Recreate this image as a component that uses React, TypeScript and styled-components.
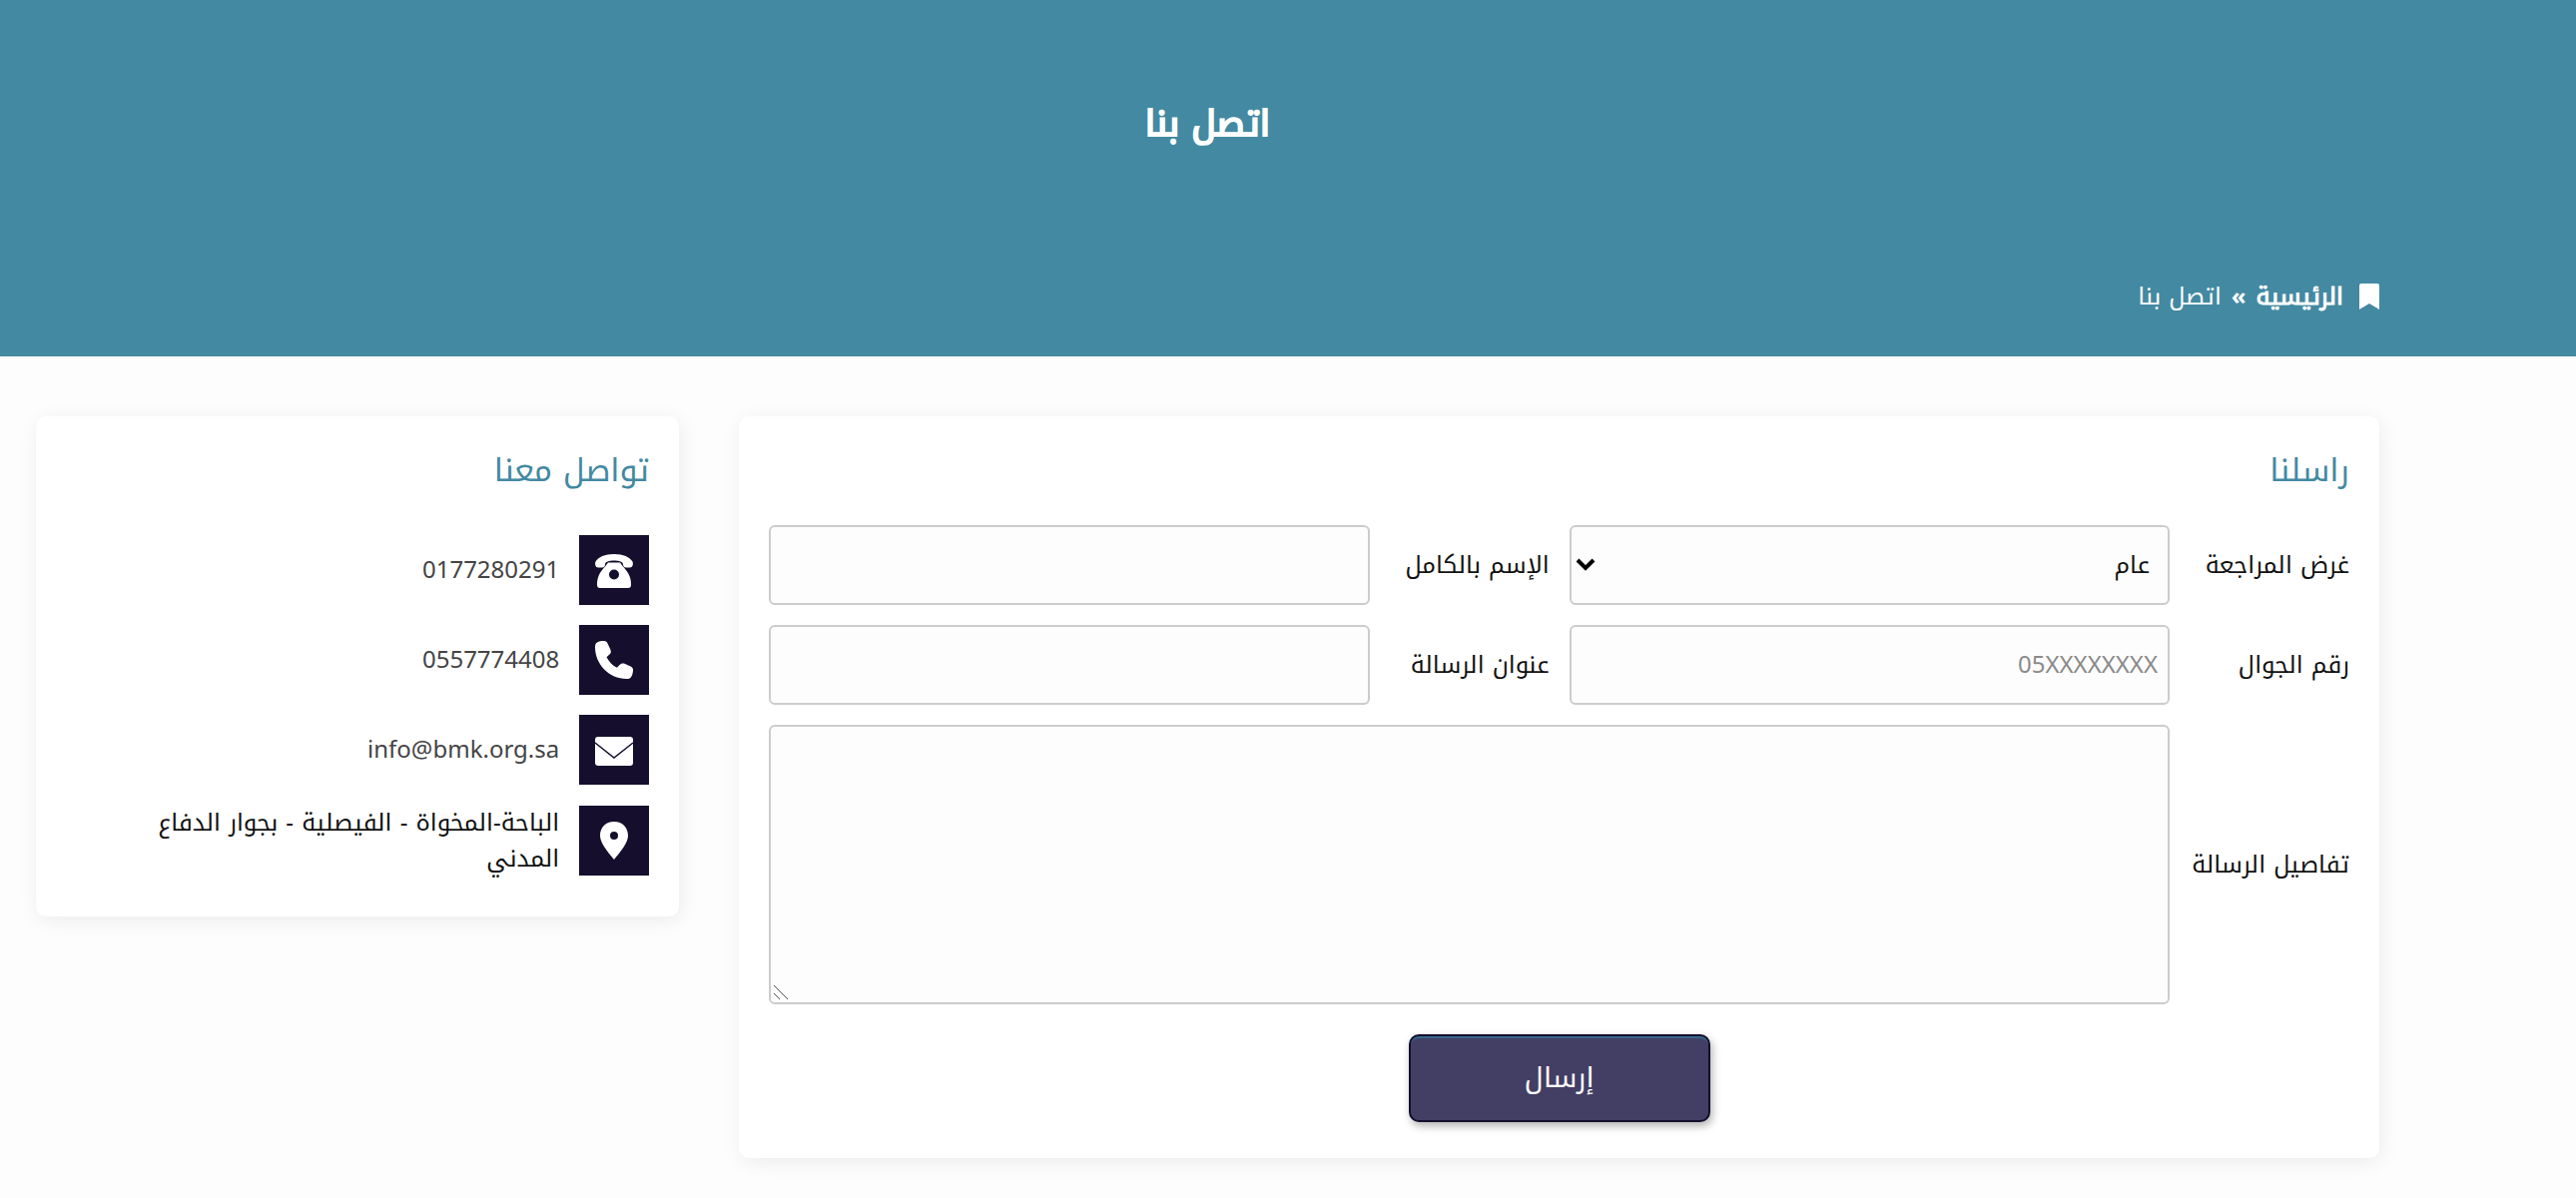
import React, { useId } from "react";
import styled, { createGlobalStyle } from "styled-components";

const GlobalStyle = createGlobalStyle`
  *, *::before, *::after { box-sizing: border-box; }
  body {
    margin: 0;
    background: #fdfdfd;
    color: #111;
    font: 400 24px/36px "Noto Kufi Arabic", "Open Sans", "Noto Sans", sans-serif;
  }
`;

const Hero = styled.header`
  display: flex;
  flex-direction: column;
  padding: 96px 197px 45px 36px;
  background: #4389a2;
  color: #fff;
`;

const PageTitle = styled.h1`
  margin: 0 0 130px;
  font-size: 36px;
  line-height: 56px;
  font-weight: 400;
  -webkit-text-stroke: 2px currentColor;
  text-align: center;
`;

const Breadcrumb = styled.nav`
  display: flex;
  align-items: center;
  gap: 10px;
  line-height: 30px;
`;

const BookmarkIcon = styled.svg`
  width: 20px;
  height: 26px;
  margin-inline-end: 6px;
  fill: #fff;
`;

const HomeLink = styled.a`
  color: inherit;
  -webkit-text-stroke: 1px currentColor;
  text-decoration: none;
`;

const Content = styled.main`
  display: grid;
  grid-template-columns: 51fr 20fr;
  align-items: start;
  gap: 60px;
  padding: 60px 197px 40px 36px;
`;

const Card = styled.section`
  padding: 30px;
  border-radius: 10px;
  background: #fff;
  box-shadow: 2px 4px 20px rgba(0, 0, 0, 0.07);
`;

const CardTitle = styled.h2`
  margin: 0 0 29px;
  color: #4389a2;
  font-size: 32px;
  line-height: 50px;
  font-weight: 400;
`;

const Form = styled.form`
  display: grid;
  grid-template-columns: 160px minmax(0, 1fr) 160px minmax(0, 1fr);
  align-items: center;
  gap: 20px;
`;

const Label = styled.label`
  white-space: nowrap;
`;

const controlStyle = `
  width: 100%;
  margin: 0;
  padding: 10px;
  border: 2px solid #ccc;
  border-radius: 6px;
  background-color: #fdfdfd;
  color: #111;
  font: inherit;
`;

const Input = styled.input`
  ${controlStyle}
  height: 80px;
  text-align: right;

  &::placeholder { color: #8a8a8a; opacity: 1; }
`;

const Stack = styled.div<{ $wide?: boolean }>`
  display: grid;
  grid-column: ${(p) => (p.$wide ? "2 / -1" : "auto")};

  > * { grid-area: 1 / 1; }
`;

const Select = styled.select`
  ${controlStyle}
  height: 80px;
  padding-inline: 18px 36px;
  appearance: none;
`;

const Arrow = styled.svg`
  align-self: center;
  justify-self: end;
  width: 20px;
  height: 14px;
  margin-inline-end: 6px;
  fill: none;
  stroke: #000;
  stroke-width: 4;
  pointer-events: none;
`;

const TextArea = styled.textarea`
  ${controlStyle}
  display: block;
  height: 280px;
  resize: both;

  &::-webkit-resizer { background: transparent; }
`;

const Grip = styled.svg`
  align-self: end;
  justify-self: end;
  width: 16px;
  height: 16px;
  margin: 4px;
  stroke: #555;
  stroke-width: 1;
  pointer-events: none;
`;

const Submit = styled.button`
  grid-column: 1 / -1;
  justify-self: center;
  width: 302px;
  height: 88px;
  margin: 10px 0 6px;
  padding: 0;
  border: 2px solid #150f2d;
  border-radius: 10px;
  background: #423e64;
  box-shadow: inset 0 3px 1px -1px #356b8c, 2px 4px 8px rgba(0, 0, 0, 0.3);
  color: #fff;
  font: inherit;
  font-size: 28px;
`;

const ContactList = styled.ul`
  margin: 0;
  padding: 0;
  list-style: none;
`;

const ContactItem = styled.li`
  display: flex;
  align-items: center;
  gap: 20px;
  padding-block: 10px;
  padding-inline-end: 40px;
`;

const IconBox = styled.span`
  display: grid;
  place-items: center;
  flex: none;
  width: 70px;
  height: 70px;
  background: #150f2d;
`;

const Icon = styled.svg`
  width: 40px;
  height: 40px;
  fill: #fff;
`;

const ContactLink = styled.a`
  color: #444;
  text-decoration: none;
`;

const Address = styled.address`
  font-style: normal;
`;

const TelephoneIcon = () => (
  <Icon viewBox="0 0 40 40" aria-hidden="true">
    <path d="M20 4C11 4 4 7 1.500 11.500C.5 14 1.500 17.500 4 17.500H8C10 17.500 11 16 11 14.500C11 11.500 15 10.500 20 10.500S29 11.500 29 14.500C29 16 30 17.500 32 17.500H36C38.500 17.500 39.500 14 38.500 11.500C36 7 29 4 20 4Z" />
    <path fillRule="evenodd" d="M14 12.500H26C28 16 33 20 35.500 26C37 30 37 32 37 35C37 37 36 38 34 38H6C4 38 3 37 3 35C3 32 3 30 4.500 26C7 20 12 16 14 12.500ZM20 19.500A5 5 0 1 0 20 29.500A5 5 0 1 0 20 19.500Z" />
  </Icon>
);

const PhoneIcon = () => (
  <Icon viewBox="0 0 40 40" aria-hidden="true">
    <path d="M3 2.500C5.500 1.200 8 .8 10 1C12 1.200 13 2 13.800 4L16.500 10C17.300 12 16.800 13.500 15.200 14.800L12.500 17.200C15 22 18.500 25.500 23 27.800L25.500 25C27 23.500 28.500 23 30.500 23.800L36.500 26.400C38.500 27.400 39.300 28.500 39 31C38.800 33.500 38 36 36.800 37.500C36 38.700 34.500 39 32.500 39C15 39 1 24 1 7.500C1 5 1.500 3.300 3 2.500Z" />
  </Icon>
);

const MailIcon = () => (
  <Icon viewBox="0 0 40 40" aria-hidden="true">
    <rect x="1" y="7" width="38" height="29" rx="3" />
    <path d="M1 13L20 28L39 13" fill="none" stroke="#150f2d" strokeWidth="1.500" />
  </Icon>
);

const PinIcon = () => (
  <Icon viewBox="0 0 40 40" aria-hidden="true">
    <path fillRule="evenodd" d="M20 1C11.500 1 6 7 6 15C6 22 13 30.500 20 39C27 30.500 34 22 34 15C34 7 28.500 1 20 1ZM20 11A4 4 0 1 1 20 19A4 4 0 1 1 20 11Z" />
  </Icon>
);

export default function App() {
  const id = useId();

  return (
    <div dir="rtl" lang="ar">
      <GlobalStyle />
      <Hero>
        <PageTitle>اتصل بنا</PageTitle>
        <Breadcrumb>
          <BookmarkIcon viewBox="0 0 20 26" aria-hidden="true">
            <path d="M2 0H18Q20 0 20 2V26L10 20L0 26V2Q0 0 2 0Z" />
          </BookmarkIcon>
          <HomeLink href="#">الرئيسية</HomeLink>
          <b>»</b>
          <span>اتصل بنا</span>
        </Breadcrumb>
      </Hero>
      <Content>
        <Card>
          <CardTitle>راسلنا</CardTitle>
          <Form>
            <Label htmlFor={`${id}purpose`}>غرض المراجعة</Label>
            <Stack>
              <Select id={`${id}purpose`}>
                <option>عام</option>
              </Select>
              <Arrow viewBox="0 0 20 14" aria-hidden="true">
                <path d="M2 2L10 10L18 2" />
              </Arrow>
            </Stack>
            <Label htmlFor={`${id}name`}>الإسم بالكامل</Label>
            <Input id={`${id}name`} type="text" />
            <Label htmlFor={`${id}mobile`}>رقم الجوال</Label>
            <Input id={`${id}mobile`} type="tel" placeholder="05XXXXXXXX" />
            <Label htmlFor={`${id}subject`}>عنوان الرسالة</Label>
            <Input id={`${id}subject`} type="text" />
            <Label htmlFor={`${id}details`}>تفاصيل الرسالة</Label>
            <Stack $wide>
              <TextArea id={`${id}details`} />
              <Grip viewBox="0 0 16 16" aria-hidden="true">
                <path d="M1 1L15 15M1 9L7 15" />
              </Grip>
            </Stack>
            <Submit type="button">إرسال</Submit>
          </Form>
        </Card>
        <Card>
          <CardTitle>تواصل معنا</CardTitle>
          <ContactList>
            <ContactItem>
              <IconBox><TelephoneIcon /></IconBox>
              <ContactLink href="tel:0177280291">0177280291</ContactLink>
            </ContactItem>
            <ContactItem>
              <IconBox><PhoneIcon /></IconBox>
              <ContactLink href="tel:0557774408">0557774408</ContactLink>
            </ContactItem>
            <ContactItem>
              <IconBox><MailIcon /></IconBox>
              <ContactLink href="mailto:info@bmk.org.sa">info@bmk.org.sa</ContactLink>
            </ContactItem>
            <ContactItem>
              <IconBox><PinIcon /></IconBox>
              <Address>الباحة-المخواة - الفيصلية - بجوار الدفاع المدني</Address>
            </ContactItem>
          </ContactList>
        </Card>
      </Content>
    </div>
  );
}
